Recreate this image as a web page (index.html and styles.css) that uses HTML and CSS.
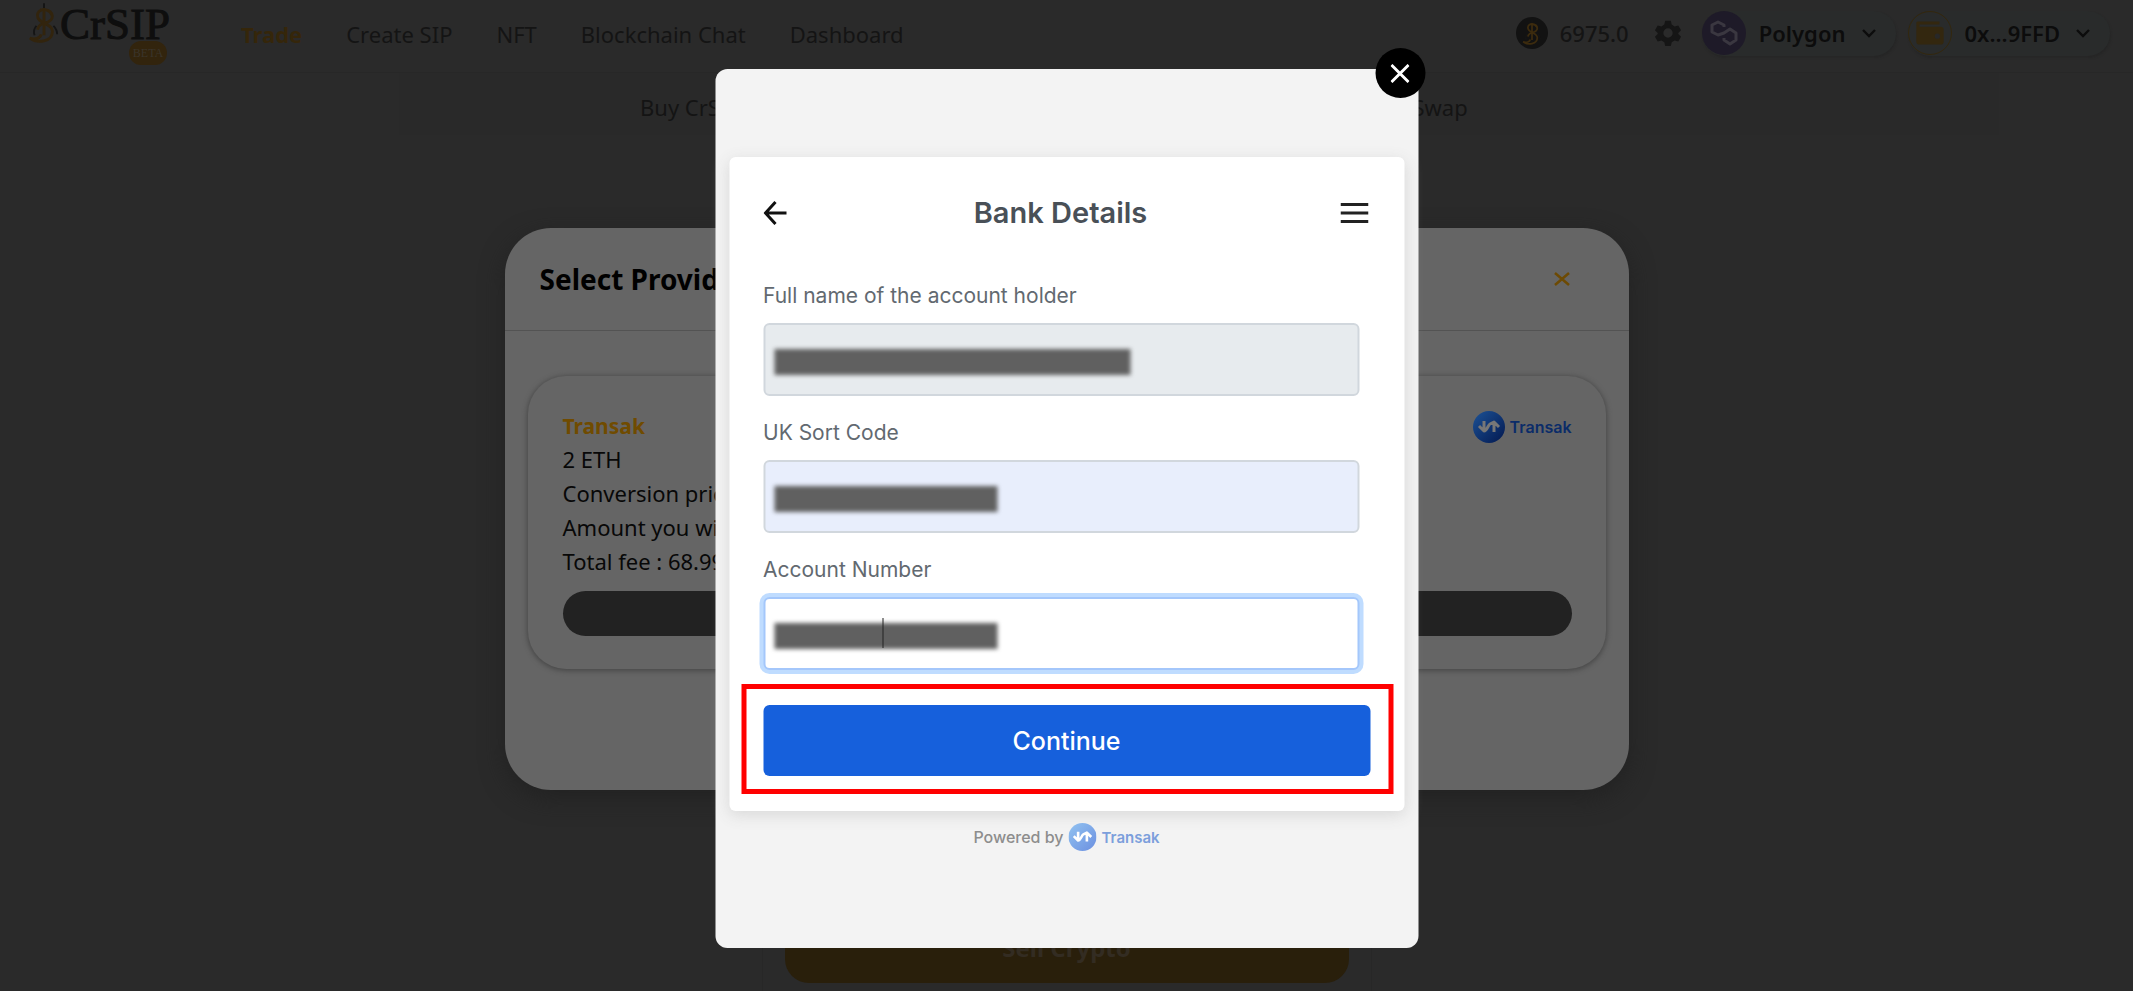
FILE: index.html
```html
<!DOCTYPE html>
<html lang="en">
<head>
<meta charset="utf-8">
<meta name="viewport" content="width=device-width, initial-scale=1">
<title>CrSIP – Trade</title>
<link rel="stylesheet" href="styles.css">
</head>
<body>
<svg class="defs" aria-hidden="true">
  <defs>
    <linearGradient id="badge-dark" x1="0" y1="0" x2="1" y2="1"><stop offset="0" stop-color="#1c5296"/><stop offset="1" stop-color="#03184f"/></linearGradient>
    <linearGradient id="badge-light" x1="0" y1="0" x2="1" y2="1"><stop offset="0" stop-color="#92c3f1"/><stop offset="1" stop-color="#6b8fe0"/></linearGradient>
    <symbol id="arrows" viewBox="0 0 32 32"><path d="M6 15l5 5c3 0 4-6 6-7l4-2 5 5M11 10v9M21 12v9" fill="none" stroke="currentColor" stroke-width="3" stroke-linejoin="round"/></symbol>
    <symbol id="chevron" viewBox="0 0 16 16"><path d="M2 5l6 6 6-6" fill="none" stroke="currentColor" stroke-width="2.4"/></symbol>
    <symbol id="dollar" viewBox="0 0 34 44"><path d="M17 0v6M9 24q-4 4-2 10M27 24q4 4 4 9" fill="none" stroke="#151515" stroke-width="2"/><path d="M17 5v29M26 14c0-9-16-10-16-1 0 9 16 8 16 17 0 11-16 13-24 7 6 2 11 0 12-4M13 7c11-2 18 9 8 13-6 1-10 3-11 8" fill="none" stroke="currentColor" stroke-width="3"/></symbol>
  </defs>
</svg>
<div class="app">
  <header class="topbar">
    <a class="logo" href="#">
      <svg class="logo-mark" aria-hidden="true"><use href="#dollar"/></svg>
      <span class="logo-word">CrSIP</span>
      <span class="beta">BETA</span>
    </a>
    <nav class="nav">
      <a class="active" href="#">Trade</a>
      <a href="#">Create SIP</a>
      <a href="#">NFT</a>
      <a href="#">Blockchain Chat</a>
      <a href="#">Dashboard</a>
    </nav>
    <div class="tools">
      <span class="coin"><svg viewBox="0 0 34 44" aria-hidden="true"><use href="#dollar"/></svg></span>
      <span class="balance">6975.0</span>
      <button class="gear" aria-label="Settings">
        <svg viewBox="0 0 30 30" aria-hidden="true"><path fill="#151515" fill-rule="evenodd" d="M12 2h6l1 4 3 2 4-1 3 5-3 3v1l3 3-3 5-4-1-3 2-1 4h-6l-1-4-3-2-4 1-3-5 3-3v-1l-3-3 3-5 4 1 3-2zM15 10a5 5 0 1 0 0 10 5 5 0 0 0 0-10z"/></svg>
      </button>
      <button class="pill">
        <span class="round polygon"><svg viewBox="0 0 44 44" aria-hidden="true"><path d="M22 16v-2l-6-3-6 3v7l6 3 6-2 6-4 6 4v7l-6 4-6-4v-2" fill="none" stroke="#3a3740" stroke-width="3" stroke-linejoin="round"/></svg></span>
        <span class="pill-text">Polygon</span>
        <svg class="chev" aria-hidden="true"><use href="#chevron"/></svg>
      </button>
      <button class="pill">
        <span class="round wallet"><svg viewBox="2 2 40 40" aria-hidden="true"><path d="M10 11h21v3H12v2h20a3 3 0 0 1 3 3v11a3 3 0 0 1-3 3H12a3 3 0 0 1-3-3V12z" fill="#33270f"/><circle cx="29" cy="25" r="2.500" fill="#282828"/></svg></span>
        <span class="pill-text">0x...9FFD</span>
        <svg class="chev" aria-hidden="true"><use href="#chevron"/></svg>
      </button>
    </div>
  </header>
  <nav class="subnav">
    <a href="#">Buy CrSIP</a>
    <a href="#">Swap</a>
  </nav>
  <main class="main">
    <section class="trade">
      <button class="sell">Sell Crypto</button>
    </section>
  </main>
</div>

<section class="providers" aria-label="Select Provider">
  <header class="providers-head">
    <h2>Select Provider</h2>
    <button class="providers-close" aria-label="Close"><svg viewBox="0 0 16 16" aria-hidden="true"><path d="M1 2l14 12M15 2L1 14" stroke="#6d4a03" stroke-width="2.5"/></svg></button>
  </header>
  <div class="offer">
    <div class="offer-top">
      <div class="offer-text">
        <h3>Transak</h3>
        <p>2 ETH</p>
        <p>Conversion price</p>
        <p>Amount you will get</p>
        <p>Total fee : 68.99</p>
      </div>
      <div class="brand">
        <svg viewBox="0 0 32 32" aria-hidden="true"><circle cx="16" cy="16" r="16" fill="url(#badge-dark)"/><use href="#arrows"/></svg>
        <span>Transak</span>
      </div>
    </div>
    <button class="offer-buy" aria-label="Buy"></button>
  </div>
</section>

<section class="widget" role="dialog" aria-label="Bank Details">
  <button class="widget-close" aria-label="Close"><svg viewBox="0 0 20 20" aria-hidden="true"><path d="M1 1l18 18M19 1L1 19" stroke="#fff" stroke-width="3"/></svg></button>
  <form class="panel">
    <header class="panel-head">
      <button type="button" class="icon" aria-label="Back"><svg viewBox="0 0 24 24" aria-hidden="true"><path d="M12 1L2 12l10 11M2 12h21" fill="none" stroke="#111" stroke-width="3"/></svg></button>
      <h1>Bank Details</h1>
      <button type="button" class="icon menu" aria-label="Menu"><svg viewBox="0 0 28 24" aria-hidden="true"><path d="M0 3.500h28M0 12h28M0 20.500h28" stroke="#222" stroke-width="3"/></svg></button>
    </header>
    <div class="fields">
      <div class="field">
        <label for="holder">Full name of the account holder</label>
        <div class="control"><input id="holder" class="locked" type="text" readonly><span class="mask long"></span></div>
      </div>
      <div class="field">
        <label for="sort">UK Sort Code</label>
        <div class="control"><input id="sort" class="filled" type="text"><span class="mask"></span></div>
      </div>
      <div class="field">
        <label for="account">Account Number</label>
        <div class="control"><input id="account" class="focused" type="text"><span class="mask"></span><span class="caret"></span></div>
      </div>
    </div>
    <div class="highlight"><button type="button" class="continue">Continue</button></div>
  </form>
  <footer class="powered">
    <span>Powered by</span>
    <svg viewBox="0 0 32 32" aria-hidden="true"><circle cx="16" cy="16" r="16" fill="url(#badge-light)"/><use href="#arrows"/></svg>
    <span class="powered-name">Transak</span>
  </footer>
</section>
</body>
</html>
```

FILE: styles.css
```css
* { box-sizing: border-box; }
body { margin: 0; background: #fff; font-family: "Noto Sans", "Open Sans", sans-serif; font-size: 22px; overflow: hidden; }
h1, h2, h3, p { margin: 0; }
a { color: inherit; text-decoration: none; }
button { border: 0; padding: 0; background: none; color: inherit; font: inherit; cursor: pointer; }
svg { display: block; }
.defs { position: absolute; width: 0; height: 0; }

.app { display: flex; flex-direction: column; height: calc(100vh - 2px); background: #2a2a2a; color: #141414; }

.topbar { display: flex; align-items: center; height: 73px; padding: 0 23px 4px 28px; border-bottom: 1px solid #272727; }
.logo { position: relative; display: flex; align-items: center; width: 143px; height: 66px; margin-right: 70px; color: #32240d; }
.logo-mark { width: 32px; height: 44px; margin-bottom: 20px; }
.logo-word { margin-bottom: 20px; font: 45px/44px "Liberation Serif", serif; color: #0e0e0e; -webkit-text-stroke: 1px #0e0e0e; }
.beta { position: absolute; right: 4px; bottom: 2px; width: 38px; height: 24px; border-radius: 12px; background: #32240d; color: #3a342b; font: 12px/24px "Liberation Serif", serif; text-align: center; }
.nav { display: flex; gap: 44px; font-size: 22px; }
.active { color: #35260a; font-weight: 700; }
.tools { display: flex; align-items: center; margin-left: auto; padding-bottom: 2px; }
.coin { display: grid; place-items: center; width: 32px; height: 32px; border-radius: 50%; background: #121212; color: #3c2b0e; }
.coin svg { width: 20px; height: 26px; }
.balance { width: 106px; padding-left: 12px; font-weight: 500; }
.gear { width: 28px; height: 28px; margin-right: 20px; }
.pill { display: flex; align-items: center; height: 45px; padding-right: 19px; border-radius: 22px; background: #292b2b; color: #0c0c0c; font-weight: 600; box-shadow: 1px 2px 2px #262626; }
.pill + .pill { margin-left: 12px; }
.round { width: 44px; height: 44px; border-radius: 50%; }
.polygon { background: #1e1a28; }
.wallet { border: 1px solid #33270d; }
.pill-text { padding: 0 15px 0 13px; font-size: 22px; }
.chev { width: 16px; height: 16px; }

.subnav { display: flex; justify-content: space-between; align-items: center; width: 75%; height: 62px; padding: 6px 531px 0 241px; margin-left: 399px; background: #292929; }
.main { flex: 1; display: flex; align-items: flex-end; justify-content: center; }
.trade { width: 610px; padding: 600px 22px 8px; border: 1px solid #272727; border-width: 0 1px; }
.sell { width: 100%; height: 66px; border-radius: 24px; background: #291f0b; color: #332c22; font-size: 24px; font-weight: 700; line-height: 24px; padding-bottom: 4px; }

.providers { position: absolute; top: 228px; left: 50%; width: 1124px; min-height: 562px; transform: translateX(-50%); border-radius: 46px; background: #656565; color: #080808; box-shadow: 0 8px 24px #222; }
.providers-head { display: flex; align-items: center; justify-content: space-between; height: 103px; padding: 0 58px 0 35px; border-bottom: 1px solid #535353; }
.providers-head h2 { font-size: 28px; font-weight: 700; color: #000; }
.providers-close { width: 18px; height: 16px; }
.providers-close svg { width: 18px; height: 16px; }
.offer { margin: 45px 23px 0; padding: 34px 34px 33px 35px; border-radius: 38px; box-shadow: 0 1px 5px 1px #484848; }
.offer-top { display: flex; justify-content: space-between; min-height: 181px; }
.offer-text { font-size: 22px; line-height: 34px; }
.offer-text h3 { font-size: 21px; line-height: 32px; color: #704b00; }
.brand { display: flex; align-items: center; gap: 5px; height: 34px; color: #0b2c69; font: 600 16px/32px Inter, sans-serif; }
.brand svg { width: 32px; height: 32px; color: #777; }
.offer-buy { display: block; width: 100%; height: 45px; border-radius: 23px; background: #222; }

.widget { position: absolute; top: 69px; left: 50%; width: 703px; min-height: 879px; padding: 88px 14px 0; transform: translateX(-50%); border-radius: 12px; background: #f3f3f3; font-family: Inter, Roboto, sans-serif; }
.widget-close { position: absolute; top: -21px; right: -7px; display: grid; place-items: center; width: 50px; height: 50px; border-radius: 50%; background: #000; }
.widget-close svg { width: 19px; height: 19px; }
.panel { padding: 36px 34px 17px; border-radius: 6px; background: #fff; box-shadow: 0 4px 16px #d8d8d8; }
.panel-head { display: grid; grid-template-columns: 28px 1fr 40px; align-items: center; height: 40px; margin-bottom: 51px; }
.panel-head h1 { font-size: 29px; font-weight: 600; line-height: 40px; color: #495057; text-align: center; }
.icon svg { width: 24px; height: 24px; }
.menu svg { width: 28px; margin-left: 10px; }
.fields { display: grid; gap: 25px; padding-right: 11px; }
.field label { display: block; margin-bottom: 15px; font-size: 21px; line-height: 24px; color: #626970; }
.control { position: relative; }
.control input { display: block; width: 100%; height: 73px; padding: 0 14px; border: 2px solid #d1d7dd; border-radius: 6px; background: #fff; font: 20px Inter, sans-serif; outline: 0; }
.control .locked { background: #e7ebee; }
.control .filled { background: #e8eefc; }
.control .focused { border-color: #a4c7fb; box-shadow: 0 0 0 4px #bfdcff; }
.mask { position: absolute; top: 26px; left: 11px; width: 223px; height: 26px; background: #606060; filter: blur(2px); }
.long { width: 356px; }
.caret { position: absolute; top: 21px; left: 119px; width: 1px; height: 30px; background: #222; }
.highlight { margin: 14px -23px 0 -22px; padding: 16px 18px 13px 17px; border: 5px solid #f00; }
.continue { display: block; width: 100%; height: 71px; border-radius: 6px; background: #1660dc; color: #fff; font-size: 25px; font-weight: 500; }
.powered { display: flex; align-items: center; justify-content: center; gap: 5px; height: 30px; margin-top: 11px; color: #8d8d8d; font-size: 16px; font-weight: 500; }
.powered svg { width: 28px; height: 28px; color: #fff; }
.powered-name { color: #7c9fdc; font-size: 15px; font-weight: 600; }
```
